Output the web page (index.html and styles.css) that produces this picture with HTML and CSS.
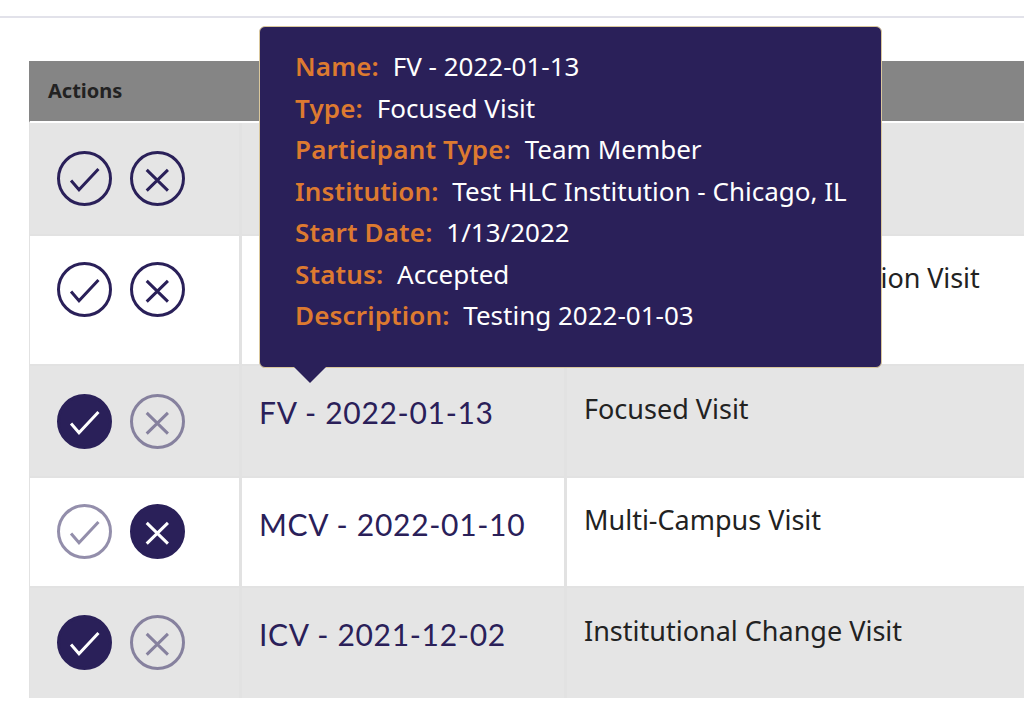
FILE: index.html
```html
<!DOCTYPE html>
<html lang="en">
<head>
<meta charset="utf-8">
<title>Visits</title>
<link rel="stylesheet" href="styles.css">
</head>
<body>
<svg class="defs" width="0" height="0" aria-hidden="true">
  <symbol id="check" viewBox="0 0 56 56"><path d="M12.500 30 L21.500 40.500 L43.500 17" fill="none" stroke="currentColor" stroke-width="3.400"/></symbol>
  <symbol id="cross" viewBox="0 0 56 56"><path d="M15.500 18 L39.500 41.500 M39.500 18 L15.500 41.500" fill="none" stroke="currentColor" stroke-width="3.400"/></symbol>
</svg>
<div class="topline"></div>
<main class="page">
  <div class="table">
    <div class="row head"><div class="cell">Actions</div><div class="cell"></div><div class="cell"></div></div>

    <div class="row odd r1">
      <div class="cell actions">
        <span class="ico"><svg><use href="#check"/></svg></span>
        <span class="ico"><svg><use href="#cross"/></svg></span>
      </div>
      <div class="cell name"></div>
      <div class="cell type"></div>
    </div>

    <div class="row r2">
      <div class="cell actions">
        <span class="ico"><svg><use href="#check"/></svg></span>
        <span class="ico"><svg><use href="#cross"/></svg></span>
      </div>
      <div class="cell name"></div>
      <div class="cell type">Comprehensive Evaluation Visit</div>
    </div>

    <div class="row odd r3">
      <div class="cell actions">
        <span class="ico on"><svg><use href="#check"/></svg></span>
        <span class="ico dim"><svg><use href="#cross"/></svg></span>
      </div>
      <div class="cell name">FV - 2022-01-13</div>
      <div class="cell type">Focused Visit</div>
    </div>

    <div class="row r4">
      <div class="cell actions">
        <span class="ico dim"><svg><use href="#check"/></svg></span>
        <span class="ico on"><svg><use href="#cross"/></svg></span>
      </div>
      <div class="cell name">MCV - 2022-01-10</div>
      <div class="cell type">Multi-Campus Visit</div>
    </div>

    <div class="row odd r5">
      <div class="cell actions">
        <span class="ico on"><svg><use href="#check"/></svg></span>
        <span class="ico dim"><svg><use href="#cross"/></svg></span>
      </div>
      <div class="cell name">ICV - 2021-12-02</div>
      <div class="cell type">Institutional Change Visit</div>
    </div>
  </div>

  <aside class="tip">
    <p><b>Name:</b> FV - 2022-01-13</p>
    <p><b>Type:</b> Focused Visit</p>
    <p><b>Participant Type:</b> Team Member</p>
    <p><b>Institution:</b> Test HLC Institution - Chicago, IL</p>
    <p><b>Start Date:</b> 1/13/2022</p>
    <p><b>Status:</b> Accepted</p>
    <p><b>Description:</b> Testing 2022-01-03</p>
  </aside>
</main>
</body>
</html>
```
FILE: styles.css
```css
html, body { margin: 0; padding: 0; background: #fff; }
body { width: 1024px; height: 710px; overflow: hidden; font-family: "Noto Sans", "Open Sans", sans-serif; color: #222; }
.defs { position: absolute; }
.topline { height: 16px; border-bottom: 2px solid #e2e2ea; }
.page { position: relative; padding: 43px 0 0 29px; }
.row { display: grid; grid-template-columns: 212px 325px 1fr; box-sizing: border-box; border-bottom: 2px solid #e2e2e2; border-left: 1px solid #e2e2e2; }
.head { height: 62px; background: #858585; border-bottom: 2px solid #fff; border-left-color: #858585; font-weight: 700; font-size: 20px; color: #222; }
.head .cell { padding: 16px 0 0 18px; border: 0; }
.odd { background: #e5e5e5; }
.r1 { height: 113px; }
.r2 { height: 130px; }
.r3 { height: 112px; }
.r4 { height: 110px; }
.r5 { height: 110px; border-bottom: 0; }
.cell { box-sizing: border-box; border-right: 3px solid #e2e2e2; }
.actions { display: flex; gap: 17.500px; padding: 27.500px 0 0 26.500px; }
.r2 .actions, .r4 .actions { padding-top: 25.500px; }
.r5 .actions { padding-top: 26.500px; }
.ico { width: 55.500px; height: 55.500px; box-sizing: border-box; border: 3px solid #2a2059; border-radius: 50%; color: #2a2059; display: block; }
.ico svg { display: block; width: 49.500px; height: 49.500px; }
.ico.on { background: #2a2059; color: #fff; }
.ico.dim { opacity: .5; }
.name { padding: 26px 0 0 17px; font-family: Lato, sans-serif; font-size: 30px; letter-spacing: .7px; line-height: 40px; color: #2a2059; }
.type { padding: 23px 0 0 17px; font-size: 27px; line-height: 40px; color: #222; border-right: 0; }
.r2 .type { padding-top: 22px; letter-spacing: -.07px; }
.r4 .type { padding-top: 22px; }
.r5 .type { padding-top: 23px; }
.tip { position: absolute; left: 259px; top: 8px; width: 623px; height: 342px; box-sizing: border-box; padding: 19px 0 0 35px; background: #2a2059; border: 1px solid #d9c79c; border-radius: 6px; color: #fff; font-size: 26px; line-height: 41.500px; }
.tip::after { content: ""; position: absolute; left: 34px; top: 100%; border: 16px solid transparent; border-top-color: #2a2059; border-bottom: 0; }
.tip p { margin: 0; }
.tip b { color: #dd7a30; font-weight: 600; letter-spacing: .15px; margin-right: 7px; }
```
